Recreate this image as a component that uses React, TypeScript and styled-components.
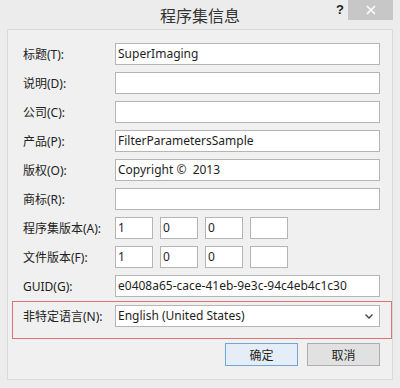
import React from 'react'
import styled, { createGlobalStyle } from 'styled-components'

const GlobalStyle = createGlobalStyle`
  html, body {
    margin: 0;
    padding: 0;
    background: #ececec;
  }
  body {
    font-family: 'Noto Sans', 'Noto Sans CJK SC', sans-serif;
    font-size: 12px;
    color: #1e1e1e;
  }
`

const Window = styled.div`
  width: 400px;
  height: 388px;
  box-sizing: border-box;
  background: #ececec;
  padding: 0 7px 8px 7px;
  display: flex;
  flex-direction: column;
`

const TitleBar = styled.div`
  height: 29px;
  flex: none;
  display: flex;
  align-items: flex-start;
  justify-content: center;
  position: relative;
`

const Title = styled.div`
  font-family: 'Noto Sans CJK SC', sans-serif;
  font-size: 16px;
  line-height: 30px;
  color: #333;
`

const HelpMark = styled.div`
  position: absolute;
  right: 49px;
  top: 2px;
  font-family: 'Liberation Sans', sans-serif;
  font-weight: bold;
  font-size: 13px;
  color: #222;
`

const CloseButton = styled.div`
  position: absolute;
  right: 0;
  top: 0;
  width: 45px;
  height: 20px;
  background: #c7c7c7;
  color: #fff;
  display: flex;
  align-items: center;
  justify-content: center;
`

const Content = styled.div`
  flex: 1;
  background: #f0f0f0;
  border: 1px solid #d9d9d9;
  padding: 13px 0 12px 4px;
  display: flex;
  flex-direction: column;
`

const Fields = styled.div`
  display: flex;
  flex-direction: column;
  gap: 7px;
`

const Row = styled.div<{ $highlight?: boolean }>`
  display: flex;
  align-items: center;
  border: 1px solid ${({ $highlight }) => ($highlight ? '#d87474' : 'transparent')};
  border-width: ${({ $highlight }) => ($highlight ? '1px' : '0 1px')};
  padding: ${({ $highlight }) => ($highlight ? '3px 0 11px' : '0')};
  margin-top: ${({ $highlight }) => ($highlight ? '-3px' : '0')};
`

const Label = styled.label`
  width: 102px;
  box-sizing: border-box;
  padding-left: 10px;
  flex: none;
  white-space: nowrap;
  color: #222;
`

const TextBox = styled.div<{ $width?: number }>`
  width: ${({ $width }) => $width ?? 265}px;
  height: 22px;
  box-sizing: border-box;
  flex: none;
  background: #fff;
  border: 1px solid #b5b5b5;
  padding: 0 2px;
  line-height: 20px;
  white-space: pre;
  overflow: hidden;
  color: #1e1e1e;
`

const VersionGroup = styled.div`
  display: flex;
  gap: 7px;
`

const Select = styled(TextBox)`
  display: flex;
  align-items: center;
  justify-content: space-between;
  padding: 0 6px 0 2px;
`

const Buttons = styled.div`
  margin-top: 4px;
  display: flex;
  justify-content: flex-end;
  gap: 9px;
  padding-right: 12px;
`

const Button = styled.button<{ $default?: boolean }>`
  width: 73px;
  height: 23px;
  box-sizing: border-box;
  border: 1px solid ${({ $default }) => ($default ? '#6fa7d6' : '#adadad')};
  background: ${({ $default }) => ($default ? '#e5eef6' : '#e1e1e1')};
  font-family: 'Noto Sans CJK SC', sans-serif;
  font-size: 12px;
  color: #1e1e1e;
  padding: 0;
`

const fields: [string, string][] = [
  ['标题(T):', 'SuperImaging'],
  ['说明(D):', ''],
  ['公司(C):', ''],
  ['产品(P):', 'FilterParametersSample'],
  ['版权(O):', 'Copyright ©  2013'],
  ['商标(R):', ''],
]

const versions: [string, string[]][] = [
  ['程序集版本(A):', ['1', '0', '0', '']],
  ['文件版本(F):', ['1', '0', '0', '']],
]

export default function App() {
  return (
    <>
      <GlobalStyle />
      <Window>
        <TitleBar>
          <Title>程序集信息</Title>
          <HelpMark>?</HelpMark>
          <CloseButton>
            <svg width="10" height="10" viewBox="0 0 10 10">
              <path d="M1 1 L9 9 M9 1 L1 9" stroke="#fff" strokeWidth="1.6" />
            </svg>
          </CloseButton>
        </TitleBar>
        <Content>
          <Fields>
            {fields.map(([label, value]) => (
              <Row key={label}>
                <Label>{label}</Label>
                <TextBox>{value}</TextBox>
              </Row>
            ))}
            {versions.map(([label, parts]) => (
              <Row key={label}>
                <Label>{label}</Label>
                <VersionGroup>
                  {parts.map((p, i) => (
                    <TextBox key={i} $width={38}>{p}</TextBox>
                  ))}
                </VersionGroup>
              </Row>
            ))}
            <Row>
              <Label>GUID(G):</Label>
              <TextBox>e0408a65-cace-41eb-9e3c-94c4eb4c1c30</TextBox>
            </Row>
            <Row $highlight>
              <Label>非特定语言(N):</Label>
              <Select>
                <span>English (United States)</span>
                <svg width="8" height="5" viewBox="0 0 8 5">
                  <path d="M0.5 0.5 L4 4 L7.5 0.5" fill="none" stroke="#444" strokeWidth="1.4" />
                </svg>
              </Select>
            </Row>
          </Fields>
          <Buttons>
            <Button $default>确定</Button>
            <Button>取消</Button>
          </Buttons>
        </Content>
      </Window>
    </>
  )
}
